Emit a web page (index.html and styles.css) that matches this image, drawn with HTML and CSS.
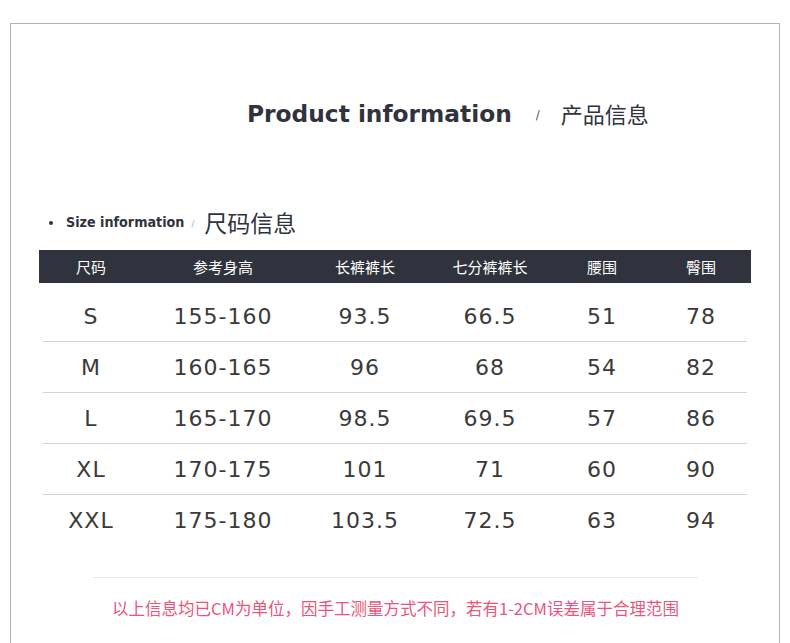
FILE: index.html
```html
<!DOCTYPE html>
<html lang="zh-CN">
<head>
<meta charset="utf-8">
<title>Product information</title>
<link rel="stylesheet" href="styles.css">
</head>
<body>
<div class="frame">
  <div class="title">
    <span class="title-en">Product information</span>
    <span class="title-sep">/</span>
    <span class="title-cn">产品信息</span>
  </div>
  <div class="subtitle">
    <span class="bullet"></span>
    <span class="sub-en">Size information</span>
    <span class="sub-sep">/</span>
    <span class="sub-cn">尺码信息</span>
  </div>
  <div class="table">
    <div class="head">
      <div>尺码</div><div>参考身高</div><div>长裤裤长</div><div>七分裤裤长</div><div>腰围</div><div>臀围</div>
    </div>
    <div class="rows">
      <div class="row"><div>S</div><div>155-160</div><div>93.5</div><div>66.5</div><div>51</div><div>78</div></div>
      <div class="row"><div>M</div><div>160-165</div><div>96</div><div>68</div><div>54</div><div>82</div></div>
      <div class="row"><div>L</div><div>165-170</div><div>98.5</div><div>69.5</div><div>57</div><div>86</div></div>
      <div class="row"><div>XL</div><div>170-175</div><div>101</div><div>71</div><div>60</div><div>90</div></div>
      <div class="row last"><div>XXL</div><div>175-180</div><div>103.5</div><div>72.5</div><div>63</div><div>94</div></div>
    </div>
  </div>
  <div class="note">以上信息均已CM为单位，因手工测量方式不同，若有1-2CM误差属于合理范围</div>
</div>
</body>
</html>
```
FILE: styles.css
```css
html, body {
  margin: 0;
  padding: 0;
  background: #fff;
  overflow: hidden;
}
body {
  font-family: "DejaVu Sans", "Noto Sans CJK SC", sans-serif;
  color: #333;
}
.frame {
  margin: 23px 0 0 10px;
  width: 770px;
  height: 700px;
  box-sizing: border-box;
  border: 1px solid #b4b4b4;
  border-bottom: none;
}
.title {
  display: flex;
  align-items: center;
  height: 30px;
  margin-top: 74px;
  padding-left: 236px;
}
.title-en {
  font-family: "DejaVu Sans", sans-serif;
  font-weight: bold;
  font-size: 23.3px;
  color: #30333d;
}
.title-sep {
  font-family: "DejaVu Sans", sans-serif;
  font-size: 12px;
  color: #555;
  margin: 4px 0 0 24px;
}
.title-cn {
  font-family: "Noto Sans CJK SC", sans-serif;
  font-size: 22px;
  color: #30333d;
  margin-left: 21px;
}
.subtitle {
  display: flex;
  align-items: center;
  height: 30px;
  margin-top: 79px;
  padding-left: 38px;
}
.bullet {
  width: 4px;
  height: 4px;
  border-radius: 50%;
  background: #30333d;
  margin-top: 2px;
}
.sub-en {
  font-family: "DejaVu Sans Condensed", "DejaVu Sans", sans-serif;
  font-stretch: condensed;
  font-weight: bold;
  font-size: 14.2px;
  color: #30333d;
  margin-left: 13px;
}
.sub-sep {
  font-size: 8px;
  color: #aaa;
  margin: 4px 0 0 7px;
}
.sub-cn {
  font-family: "Noto Sans CJK SC", sans-serif;
  font-size: 23px;
  color: #30333d;
  margin-left: 10px;
}
.table {
  margin: 13px 0 0 28px;
  width: 712px;
}
.head, .row {
  display: grid;
  grid-template-columns: 104px 160px 124px 126px 98px 100px;
  text-align: center;
}
.head {
  height: 33px;
  line-height: 33px;
  background: #30333d;
  color: #fff;
  font-family: "Noto Sans CJK SC", sans-serif;
  font-size: 15px;
}
.rows {
  margin-top: 8px;
}
.row {
  height: 51px;
  line-height: 51px;
  font-family: "DejaVu Sans", sans-serif;
  font-size: 22px;
  letter-spacing: 1px;
  color: #3a3a3a;
  background: linear-gradient(#d4d4d4, #d4d4d4) center bottom / calc(100% - 8px) 1px no-repeat;
}
.row.last {
  background: none;
}
.note {
  margin: 31px 0 0 82px;
  width: 605px;
  border-top: 1px solid #e6e6e6;
  padding-top: 18px;
  text-align: center;
  font-family: "Noto Sans CJK SC", sans-serif;
  font-size: 16.5px;
  color: #e9557d;
}
```
